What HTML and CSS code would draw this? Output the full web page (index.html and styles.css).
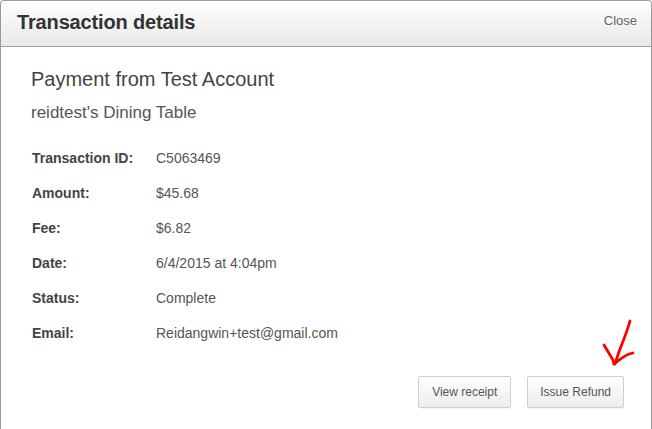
FILE: index.html
```html
<!DOCTYPE html>
<html>
<head>
<meta charset="utf-8">
<link rel="stylesheet" href="styles.css">
</head>
<body>
<div class="modal">
  <div class="modal-header">
    <h1 class="title">Transaction details</h1>
    <a class="close">Close</a>
  </div>
  <div class="modal-body">
    <h2 class="payer">Payment from Test Account</h2>
    <h3 class="item">reidtest's Dining Table</h3>
    <dl class="details">
      <div class="row"><dt>Transaction ID:</dt><dd>C5063469</dd></div>
      <div class="row"><dt>Amount:</dt><dd>$45.68</dd></div>
      <div class="row"><dt>Fee:</dt><dd>$6.82</dd></div>
      <div class="row"><dt>Date:</dt><dd>6/4/2015 at 4:04pm</dd></div>
      <div class="row"><dt>Status:</dt><dd>Complete</dd></div>
      <div class="row"><dt>Email:</dt><dd>Reidangwin+test@gmail.com</dd></div>
    </dl>
    <div class="actions">
      <button class="btn">View receipt</button>
      <button class="btn">Issue Refund</button>
    </div>
  </div>
  <svg class="annotation" width="40" height="52" viewBox="0 0 40 52">
    <path d="M30 2 C28 10 24 20 20 30 C18 36 16 41 15 45" fill="none" stroke="#f00" stroke-width="2.8" stroke-linecap="round"/>
    <path d="M4 26 C7 31 10 36 13 41 L14 45" fill="none" stroke="#f00" stroke-width="2.8" stroke-linecap="round"/>
    <path d="M14 45 C19 41 24 37 29 35 L33 34" fill="none" stroke="#f00" stroke-width="2.8" stroke-linecap="round"/>
  </svg>
</div>
</body>
</html>
```

FILE: styles.css
```css
html, body {
  margin: 0;
  padding: 0;
  background: #fff;
  overflow: hidden;
}
body {
  width: 652px;
  height: 429px;
  font-family: "Liberation Sans", Arial, sans-serif;
}
.modal {
  position: relative;
  box-sizing: border-box;
  width: 652px;
  height: 429px;
  border: 1px solid #9a9a9a;
  border-bottom: none;
  border-radius: 4px 4px 0 0;
  background: #fff;
}
.modal-header {
  display: flex;
  justify-content: space-between;
  align-items: flex-start;
  padding: 9px 14px 12px 16px;
  height: 24px;
  background: linear-gradient(#ffffff, #e8e8e8);
  border-bottom: 1px solid #a0a0a0;
  border-radius: 4px 4px 0 0;
}
.title {
  margin: 0;
  font-size: 20px;
  line-height: 24px;
  font-weight: bold;
  color: #333;
  letter-spacing: -0.15px;
}
.close {
  font-size: 13px;
  line-height: 16px;
  margin-top: 3px;
  color: #666;
  cursor: pointer;
}
.modal-body {
  padding: 20px 27px 0 30px;
}
.payer {
  margin: 0;
  font-size: 20px;
  line-height: 24px;
  font-weight: normal;
  color: #444;
}
.item {
  margin: 10px 0 0 0;
  font-size: 17px;
  line-height: 24px;
  font-weight: normal;
  color: #555;
}
.details {
  margin: 15px 0 0 0;
}
.row {
  display: flex;
  height: 35px;
  line-height: 36px;
  font-size: 14px;
}
.row dt {
  width: 124px;
  font-weight: bold;
  color: #444;
  padding-left: 1px;
}
.row dd {
  margin: 0;
  color: #555;
}
.actions {
  display: flex;
  justify-content: flex-end;
  gap: 16px;
  margin-top: 26px;
}
.btn {
  height: 32px;
  padding: 0 12px;
  border: 1px solid #cfcfcf;
  border-radius: 2px;
  background: linear-gradient(#ffffff, #ececec);
  font-family: "Liberation Sans", Arial, sans-serif;
  font-size: 12px;
  color: #555;
  box-shadow: 0 1px 1px rgba(0,0,0,0.04);
}
.btn:first-child {
  padding: 0 13px;
}
.annotation {
  position: absolute;
  left: 599px;
  top: 318px;
}
```
